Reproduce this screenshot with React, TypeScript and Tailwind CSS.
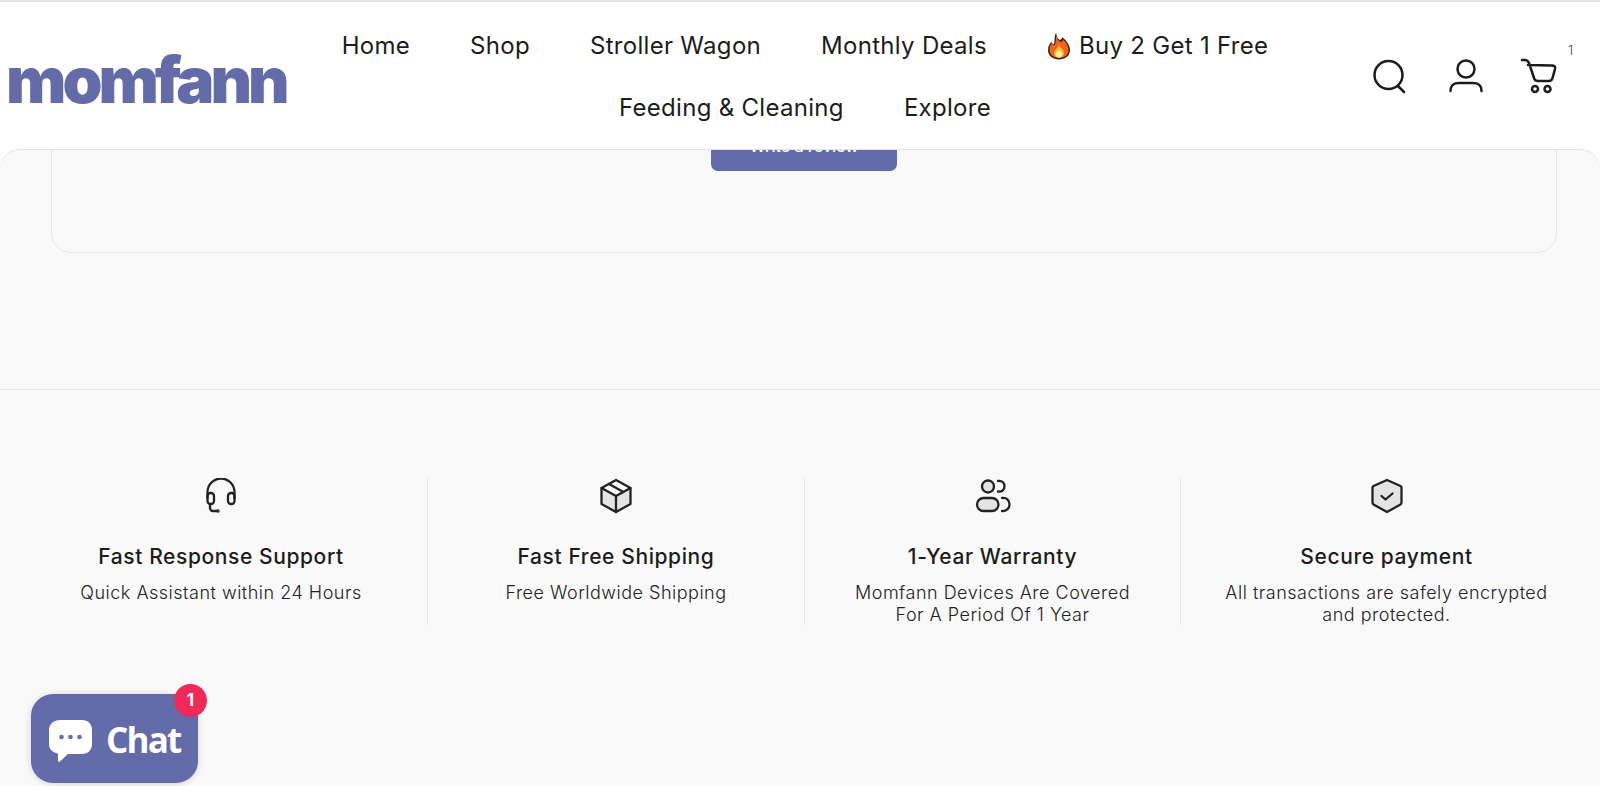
import { ReactNode } from 'react'

const NAV = ['Home', 'Shop', 'Stroller Wagon', 'Monthly Deals']

const FEATURES: { title: string; lines: string[]; icon: ReactNode }[] = [
  { title: 'Fast Response Support', lines: ['Quick Assistant within 24 Hours'], icon: <HeadsetIcon /> },
  { title: 'Fast Free Shipping', lines: ['Free Worldwide Shipping'], icon: <BoxIcon /> },
  { title: '1-Year Warranty', lines: ['Momfann Devices Are Covered', 'For A Period Of 1 Year'], icon: <UsersIcon /> },
  { title: 'Secure payment', lines: ['All transactions are safely encrypted', 'and protected.'], icon: <ShieldIcon /> },
]

function HeadsetIcon() {
  return (
    <svg width="36" height="36" viewBox="0 0 36 36" fill="none" stroke="#222" strokeWidth="2.300" strokeLinecap="round" strokeLinejoin="round">
      <path d="M4.500 20v-6a13.500 13.500 0 0 1 27 0v6" />
      <rect x="4.500" y="15" width="6.500" height="11" rx="3" />
      <rect x="25" y="15" width="6.500" height="11" rx="3" />
      <path d="M7 26v4a3 3 0 0 0 3 3h4" />
      <circle cx="15" cy="33" r="0.6" fill="#222" />
    </svg>
  )
}

function BoxIcon() {
  return (
    <svg width="36" height="36" viewBox="0 0 36 36" fill="none" stroke="#222" strokeWidth="2.300" strokeLinecap="round" strokeLinejoin="round">
      <path d="M18 18 3 10v16l15 8.500 15-8.500V10z" fill="#e4e4e4" stroke="none" />
      <path d="M18 2 32.500 10v16L18 34 3.500 26V10z" />
      <path d="M3.500 10 18 18l14.500-8M18 18v16M11 6l14.500 8" />
    </svg>
  )
}

function UsersIcon() {
  return (
    <svg width="36" height="36" viewBox="0 0 36 36" fill="none" stroke="#222" strokeWidth="2.300" strokeLinecap="round" strokeLinejoin="round">
      <circle cx="13" cy="8.500" r="6" fill="#e4e4e4" />
      <rect x="2" y="20" width="21.500" height="13" rx="6.500" fill="#e4e4e4" />
      <path d="M23 3c4.500-.5 6.500 2 6.500 5.500S27 14 23 13.500M27 20c5-.5 7.500 2.500 7.500 6.500S31 33.500 27 33" />
    </svg>
  )
}

function ShieldIcon() {
  return (
    <svg width="36" height="36" viewBox="0 0 36 36" fill="none" stroke="#222" strokeWidth="2.300" strokeLinecap="round" strokeLinejoin="round">
      <path d="M18 2 31.500 8a2 2 0 0 1 1 1.500v15c0 1-.5 1.500-1 2L18 34 4.500 26.500c-.5-.5-1-1-1-2v-15a2 2 0 0 1 1-1.500z" fill="#e4e4e4" />
      <path d="m12.500 18 4 3.500 7-6" />
    </svg>
  )
}

function FlameIcon() {
  return (
    <svg width="24" height="28" viewBox="0 0 24 28">
      <path d="M9 1c1 3 .5 5 4 7 2-1 2-2 2-3 4 3 8 8 8 13 0 6-5 9.500-11 9.500S1 24 1 18c0-4 2-6 3-8 1 1 1.500 2 3 2C8 9 7 4 9 1z" fill="#3a2415" />
      <path d="M9.500 4c1 3 1.500 5 4.500 6 1.500-.5 2-1.500 2-2.500 3 2.500 5.500 6.500 5.500 10.500 0 5-4.500 8-9.500 8s-9.500-3-9.500-8c0-3 1-5 2-6.500 1 1 2 1.500 3.500 1C9 10 8.500 7 9.500 4z" fill="#f0641e" />
      <path d="M12 13c1 3 5 4 5 8 0 3-2.500 4.500-5 4.500S7 24 7 21c0-3 4-4.500 5-8z" fill="#fbb93a" />
      <ellipse cx="12" cy="22" rx="3" ry="3.500" fill="#fff0a0" />
    </svg>
  )
}

function ChatBubble() {
  return (
    <svg className="mt-[6px]" width="45" height="45" viewBox="0 0 45 45">
      <path d="M12 1h22c6 0 10 4 10 10v14c0 6-4 10-10 10H20l-8 7.500c-1 .8-2 .3-2-1V34.500C4 33.500 1 30 1 25V11C1 5 6 1 12 1z" fill="#fff" />
      <circle cx="13.500" cy="18" r="2.300" fill="#636ba8" />
      <circle cx="22.500" cy="18" r="2.300" fill="#636ba8" />
      <circle cx="31.500" cy="18" r="2.300" fill="#636ba8" />
    </svg>
  )
}

export default function App() {
  return (
    <div className="relative h-[786px] w-[1600px] overflow-hidden bg-white font-['Inter',sans-serif] text-[#1c1c1c]">
      {/* Header */}
      <header className="relative z-10 flex h-[149px] items-center border-t-2 border-[#e4e4e4] bg-white">
        <div className="w-[300px] pl-[6px] pt-[9px] text-[64px] leading-none font-black tracking-[-4px] text-[#636ba8]">
          momfann
        </div>
        <nav className="flex w-[1010px] flex-wrap justify-center gap-x-[60px] gap-y-[33px] pt-[2px] text-[24px] leading-[29px] font-normal tracking-[0.3px]">
          {NAV.map(item => (
            <a key={item}>{item}</a>
          ))}
          <a className="flex items-center gap-[8px]">
            <FlameIcon />
            Buy 2 Get 1 Free
          </a>
          <a>Feeding &amp; Cleaning</a>
          <a>Explore</a>
        </nav>
        <div className="flex flex-1 items-center justify-end pr-[41px]">
          <svg width="40" height="40" viewBox="0 0 40 40" fill="none" stroke="#1c1c1c" strokeWidth="2.500" strokeLinecap="round">
            <circle cx="19.500" cy="19" r="14" />
            <path d="m29 30 6 6" />
          </svg>
          <svg className="ml-[37px]" width="40" height="40" viewBox="0 0 40 40" fill="none" stroke="#1c1c1c" strokeWidth="2.500" strokeLinecap="round">
            <circle cx="20" cy="13" r="8.500" />
            <path d="M4.500 35c0-6 3-8 9-8h13c6 0 9 2 9 8" />
          </svg>
          <div className="relative ml-[33px]">
            <svg width="40" height="40" viewBox="0 0 40 40" fill="none" stroke="#1c1c1c" strokeWidth="2.500" strokeLinecap="round" strokeLinejoin="round">
              <path d="M3 4h3c2 0 3 1 4 3l5 15c.5 2 2 3 4 3h11c2 0 3-1 3.500-3L36 13c.5-2.500-.5-3.500-3-3.500l-24-.5" />
              <circle cx="16" cy="33" r="3" />
              <circle cx="28.500" cy="33" r="3" />
            </svg>
            <span className="absolute top-[-15px] right-[-14px] text-[13px] font-light text-[#444]">1</span>
          </div>
        </div>
      </header>

      {/* Main */}
      <main className="relative h-[637px] overflow-hidden rounded-t-[20px] border-t border-[#e3e3e3] bg-[#f9f9f9]">
        <div className="-mt-[40px] mr-[43px] ml-[51px] h-[143px] rounded-[20px] border border-[#e5e5e5] pt-[17px]">
          <div className="mx-auto h-[43px] w-[186px] rounded-[7px] bg-[#636ba8] pt-[6px] text-center text-[16px] font-medium text-white">
            Write a review
          </div>
        </div>

        <div className="mt-[136px] border-t border-[#eaeaea] pt-[88px]">
          <div className="grid h-[147px] grid-cols-[413px_377px_376px_1fr] pr-[8px] pl-[15px]">
            {FEATURES.map((f, i) => (
              <div key={f.title} className={`flex flex-col items-center ${i < 3 ? 'border-r border-[#e6e6e6]' : ''}`}>
                <div className="h-[36px]">{f.icon}</div>
                <h3 className="mt-[29px] text-[21px] leading-[28px] font-[450] tracking-[0.6px]">{f.title}</h3>
                <div className="mt-[11px] text-center text-[18px] leading-[21.500px] font-light tracking-[0.5px] text-[#222]">
                  {f.lines.map(l => (
                    <p key={l}>{l}</p>
                  ))}
                </div>
              </div>
            ))}
          </div>
        </div>
      </main>

      {/* Chat launcher */}
      <div className="absolute top-[694px] left-[31px] z-20 flex h-[89px] w-[167px] items-center gap-[13px] rounded-[22px] bg-[#636ba8] pl-[17px] shadow-[0_1px_6px_rgba(0,0,0,0.15)]">
        <ChatBubble />
        <span className="pt-[2px] font-['Open_Sans',sans-serif] text-[35px] leading-none font-bold tracking-[-1.8px] text-white">Chat</span>
        <span className="absolute top-[-10px] right-[-9px] flex h-[33px] w-[33px] items-center justify-center rounded-full bg-[#ef2a58] text-[17px] font-bold text-white">
          1
        </span>
      </div>
    </div>
  )
}
